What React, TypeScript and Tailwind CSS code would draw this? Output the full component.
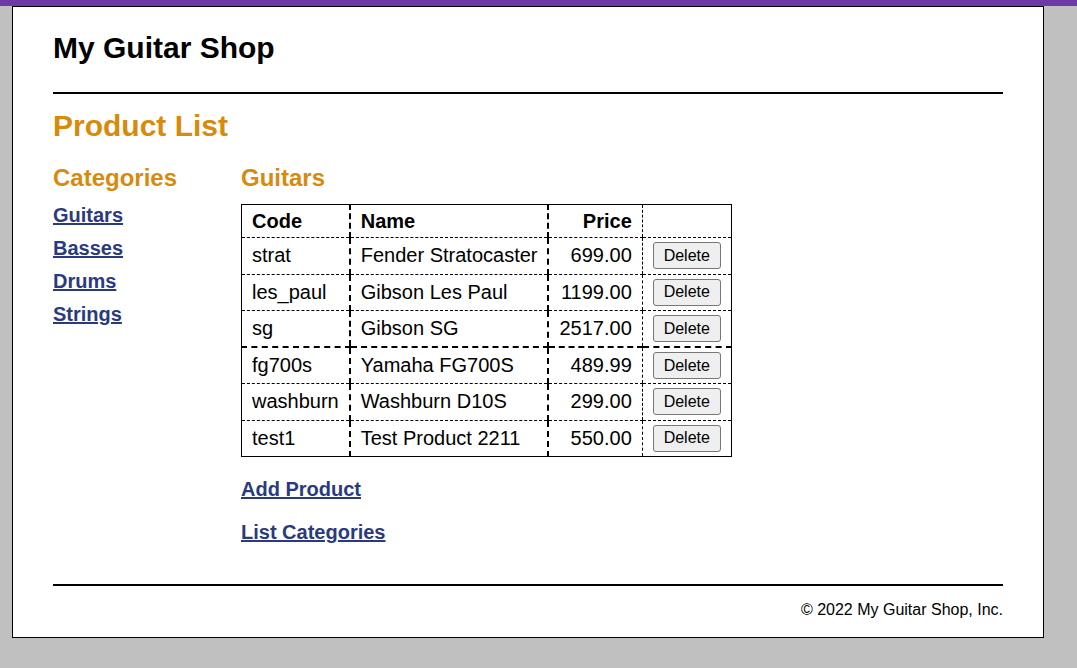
import React from 'react'

const products = [
  { code: 'strat', name: 'Fender Stratocaster', price: '699.00' },
  { code: 'les_paul', name: 'Gibson Les Paul', price: '1199.00' },
  { code: 'sg', name: 'Gibson SG', price: '2517.00' },
  { code: 'fg700s', name: 'Yamaha FG700S', price: '489.99' },
  { code: 'washburn', name: 'Washburn D10S', price: '299.00' },
  { code: 'test1', name: 'Test Product 2211', price: '550.00' },
]

const categories = ['Guitars', 'Basses', 'Drums', 'Strings']

const App = () => {
  return (
    <div className="min-h-[668px] bg-[#c0c0c0] font-['Liberation_Sans',Arial,sans-serif] text-black">
      {/* top bar */}
      <div className="h-[6px] bg-[#6d39a5]" />
      <div className="ml-[12px] w-[1032px] border border-black bg-white px-[40px] pb-[18px]">
        <header className="border-b-2 border-black pt-[23px] pb-[26px]">
          <h1 className="text-[30px] font-bold leading-[36px]">My Guitar Shop</h1>
        </header>

        <main className="pb-[40px]">
          <h1 className="mt-[14px] text-[30px] font-bold leading-[36px] text-[#d88a0c]">
            Product List
          </h1>
          <div className="mt-[20px] flex">
            {/* sidebar */}
            <aside className="w-[188px] shrink-0">
              <h2 className="text-[24px] font-bold leading-[28px] text-[#d88a0c]">
                Categories
              </h2>
              <nav className="mt-[11px] flex flex-col gap-[9px]">
                {categories.map((c) => (
                  <a
                    key={c}
                    href="#"
                    className="text-[20px] font-bold leading-[24px] text-[#293b7e] underline"
                  >
                    {c}
                  </a>
                ))}
              </nav>
            </aside>

            {/* product table */}
            <section>
              <h2 className="text-[24px] font-bold leading-[28px] text-[#d88a0c]">Guitars</h2>
              <table className="mt-[12px] border-collapse whitespace-nowrap border border-black text-[20px] leading-[23px]">
                <thead>
                  <tr className="h-[33px]">
                    <th className="w-[108px] border-b border-dashed border-black px-[10px] text-left">
                      Code
                    </th>
                    <th className="w-[198px] border-x-2 border-b border-dashed border-black px-[10px] text-left">
                      Name
                    </th>
                    <th className="w-[93px] border-b border-dashed border-black px-[10px] text-right">
                      Price
                    </th>
                    <th className="w-[89px] border-b border-l border-dashed border-black px-[10px]" />
                  </tr>
                </thead>
                <tbody>
                  {products.map((p, i) => {
                    const rowBorder =
                      i === 2
                        ? 'border-b-2 border-dashed border-black'
                        : 'border-b border-dashed border-black'
                    return (
                      <tr key={p.code} className="h-[36.5px]">
                        <td className={`px-[10px] ${rowBorder}`}>{p.code}</td>
                        <td className={`border-x-2 px-[10px] ${rowBorder}`}>{p.name}</td>
                        <td className={`px-[10px] text-right ${rowBorder}`}>{p.price}</td>
                        <td className={`border-l px-[10px] ${rowBorder}`}>
                          <button className="h-[27px] w-[68px] rounded-[3px] border border-[#767676] bg-[#efefef] text-[16px] leading-[18px]">
                            Delete
                          </button>
                        </td>
                      </tr>
                    )
                  })}
                </tbody>
              </table>
              <div className="mt-[20px] flex flex-col gap-[19px]">
                <a href="#" className="text-[20px] font-bold leading-[24px] text-[#293b7e] underline">
                  Add Product
                </a>
                <a href="#" className="text-[20px] font-bold leading-[24px] text-[#293b7e] underline">
                  List Categories
                </a>
              </div>
            </section>
          </div>
        </main>

        <footer className="border-t-2 border-black pt-[15px]">
          <p className="text-right text-[16px] leading-[18px]">© 2022 My Guitar Shop, Inc.</p>
        </footer>
      </div>
    </div>
  )
}

export default App
